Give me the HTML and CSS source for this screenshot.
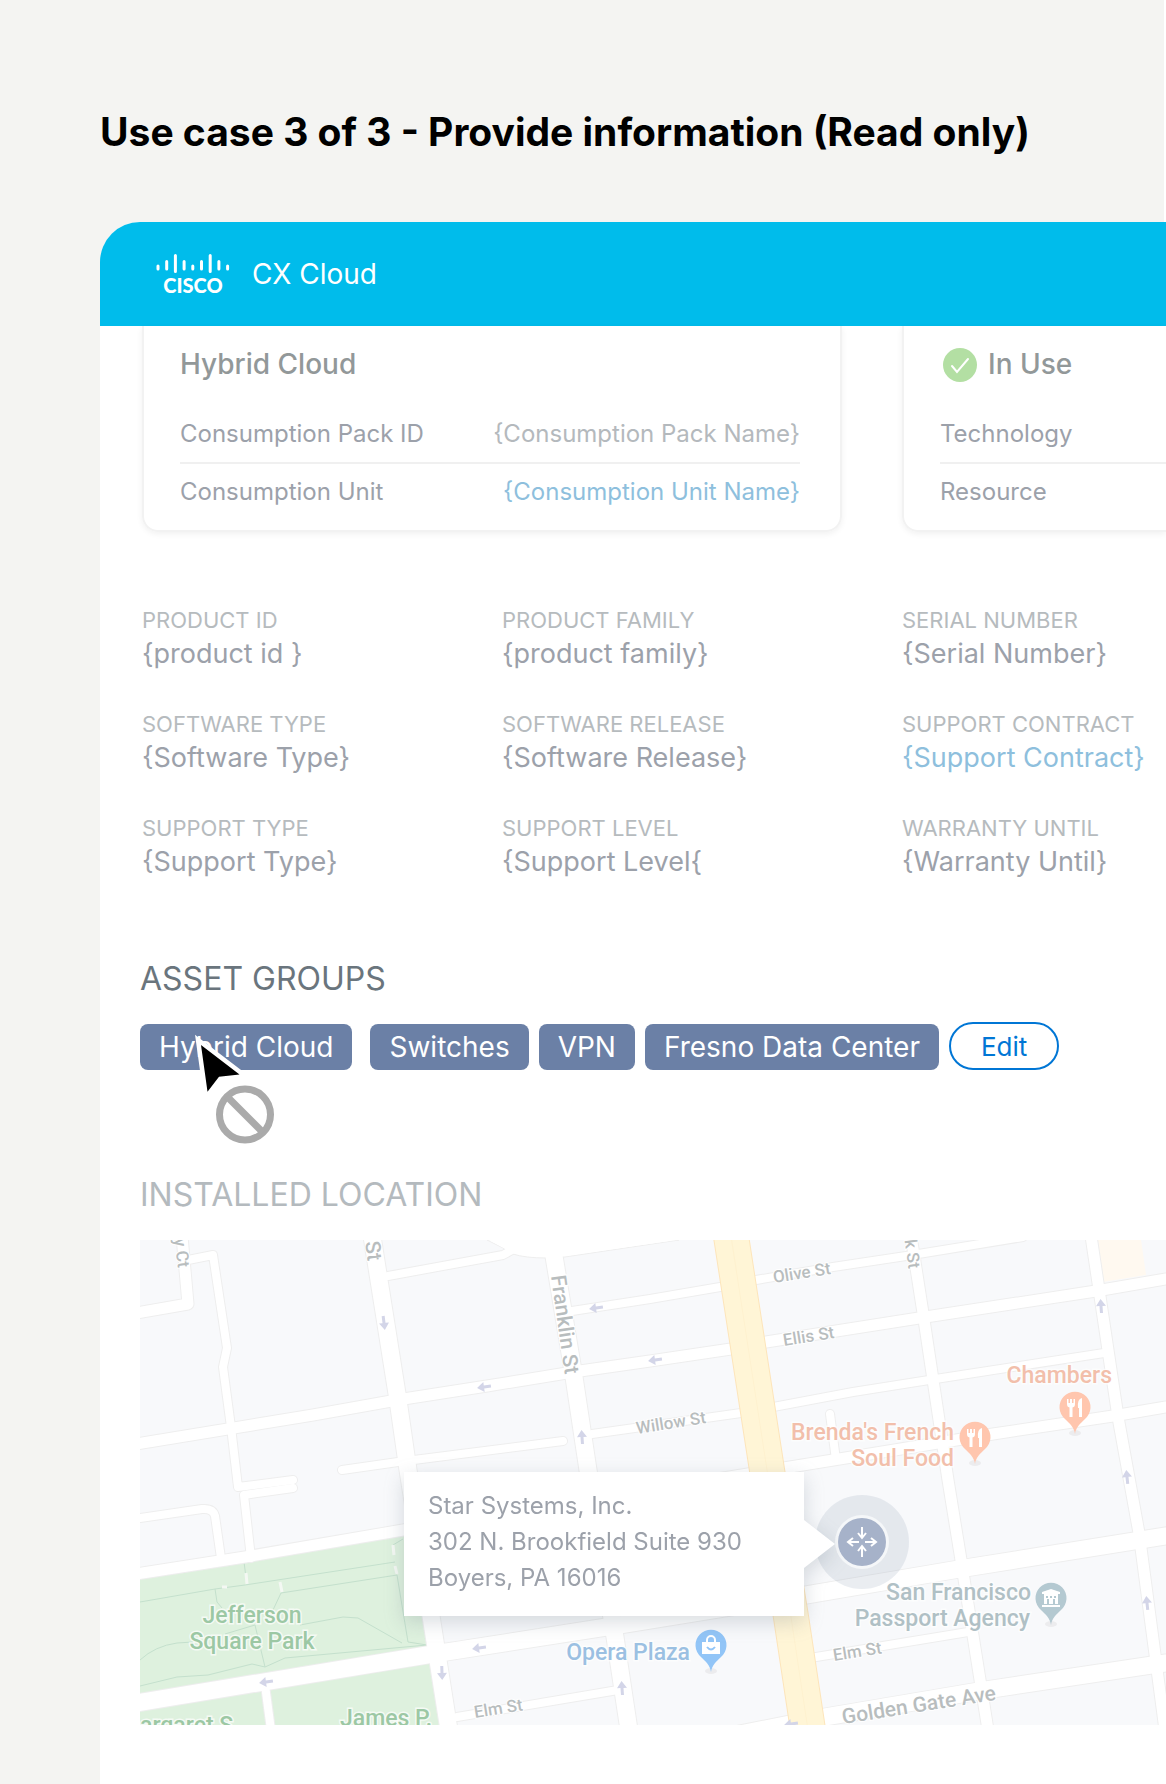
FILE: index.html
```html
<!DOCTYPE html>
<html lang="en">
<head>
<meta charset="utf-8">
<meta name="viewport" content="width=device-width, initial-scale=1">
<title>CX Cloud - Asset details</title>
<link rel="stylesheet" href="styles.css">
</head>
<body>
<div class="stage">
  <h1 class="stage-title">Use case 3 of 3 - Provide information (Read only)</h1>

  <div class="app">
    <header class="app-bar">
      <svg class="logo" viewBox="0 0 78 44" role="img" aria-label="Cisco">
        <g stroke="#fff" stroke-width="3" stroke-linecap="round">
          <path d="M4 14v3M12.700 9.500v7.500M21.400 3.500v16M30.100 9.500v7.500M38.800 14v3M47.500 9.500v7.500M56.200 3.500v16M64.900 9.500v7.500M73.600 14v3"/>
        </g>
        <text class="logo-word" x="39" y="41" text-anchor="middle">CISCO</text>
      </svg>
      <span class="app-name">CX Cloud</span>
    </header>

    <main class="content">
      <div class="cards">
        <section class="card">
          <h2 class="card-title">Hybrid Cloud</h2>
          <dl class="rows">
            <div class="row"><dt>Consumption Pack ID</dt><dd>{Consumption Pack Name}</dd></div>
            <div class="row"><dt>Consumption Unit</dt><dd><a class="link" href="#">{Consumption Unit Name}</a></dd></div>
          </dl>
        </section>
        <section class="card card-cut">
          <h2 class="card-title">
            <svg class="status-icon" viewBox="0 0 40 40" aria-hidden="true">
              <circle cx="20" cy="21" r="17" fill="#b3dfa3"/>
              <path d="M12 22l5 6L28 15" fill="none" stroke="#fff" stroke-width="2" stroke-linecap="round"/>
            </svg>
            In Use
          </h2>
          <dl class="rows">
            <div class="row"><dt>Technology</dt></div>
            <div class="row"><dt>Resource</dt></div>
          </dl>
        </section>
      </div>

      <dl class="fields">
        <div class="field"><dt>PRODUCT ID</dt><dd>{product id }</dd></div>
        <div class="field"><dt>PRODUCT FAMILY</dt><dd>{product family}</dd></div>
        <div class="field"><dt>SERIAL NUMBER</dt><dd>{Serial Number}</dd></div>
        <div class="field"><dt>SOFTWARE TYPE</dt><dd>{Software Type}</dd></div>
        <div class="field"><dt>SOFTWARE RELEASE</dt><dd>{Software Release}</dd></div>
        <div class="field"><dt>SUPPORT CONTRACT</dt><dd><a class="link" href="#">{Support Contract}</a></dd></div>
        <div class="field"><dt>SUPPORT TYPE</dt><dd>{Support Type}</dd></div>
        <div class="field"><dt>SUPPORT LEVEL</dt><dd>{Support Level{</dd></div>
        <div class="field"><dt>WARRANTY UNTIL</dt><dd>{Warranty Until}</dd></div>
      </dl>

      <section class="groups">
        <h2 class="section-title">ASSET GROUPS</h2>
        <div class="chips">
          <span class="chip chip-first">Hybrid Cloud</span>
          <span class="chip">Switches</span>
          <span class="chip">VPN</span>
          <span class="chip">Fresno Data Center</span>
          <button class="edit" type="button">Edit</button>
          <svg class="cursor" viewBox="0 0 90 120" aria-hidden="true">
            <path d="M11 15L49.500 44.500L29 46.700L17.500 61.700Z" fill="none" stroke="#fff" stroke-width="9" stroke-linejoin="miter"/>
            <path d="M11 15L49.500 44.500L29 46.700L17.500 61.700Z" fill="#000"/>
            <g fill="none" stroke="#aaa" stroke-width="7">
              <circle cx="55" cy="84.500" r="25.500"/>
              <path d="M37 66.500L73 102.500"/>
            </g>
          </svg>
        </div>
      </section>

      <section class="location">
        <h2 class="section-title section-title-muted">INSTALLED LOCATION</h2>
        <div class="map">
          <svg class="map-art" viewBox="0 0 1026 485" preserveAspectRatio="xMinYMin slice" role="img" aria-label="Street map">
            <defs>
              <path id="arrow" d="M-7 0L0 -5V-1.500H7V1.500H0V5Z" fill="#d3d5e8"/>
              <path id="pin" d="M0 27C-1 20 -5 17 -10 12A15.500 15.500 0 1 1 10 12C5 17 1 20 0 27Z"/>
              <g id="cutlery" fill="#fff">
                <path d="M-8 -8h1.500v4h1.500v-4h2v4h1.500v-4h1.500v5q0 3 -2.500 3.500V10h-3V.500Q-8 0 -8 -3Z"/>
                <path d="M3 1Q2 -8 7 -9V10H4V1Z"/>
              </g>
              <g id="narrow">
                <path d="M202 230L258 222L423 201"/>
                <path d="M248 36L363 15L372 10"/>
                <path d="M432 71L510 59L586 46M616 40L693 27L766 16L883 -3"/>
                <path d="M452 194L601 173L713 152L789 140L964 113"/>
                <path d="M48 20L73 15L87 108L83 127L91 187L98 247L153 240"/>
                <path d="M153 248L104 255L111 318"/>
                <path d="M0 278L62 269Q73 268 75 276L81 318"/>
                <path d="M317 477L478 450M670 418L828 392"/>
                <path d="M690 174L696 220"/>
                <path d="M125 445L131 490"/>
              </g>
              <g id="medium">
                <path d="M42 -4L48 64L-4 73"/>
                <path d="M-4 204L173 175L257 160L347 146L433 132L510 121L591 109L626 102L779 78L956 51L1026 39L1300 -3"/>
                <path d="M-4 334L105 317L263 290L644 228L853 194L973 176L1026 167L1300 124"/>
                <path d="M771 -4L783 73L808 240L821 320L848 490"/>
                <path d="M951 -4L978 177L999 293L1025 490"/>
              </g>
              <g id="wide">
                <path d="M232 -4L258 160L268 230L309 490"/>
                <path d="M413 10L434 137L448 230L475 397L489 490"/>
                <path d="M-4 463L287 415L473 386L666 355L819 329L1026 296L1300 250"/>
                <path d="M590 496L685 477L839 451L1026 423L1300 380"/>
              </g>
            </defs>

            <rect width="1600" height="485" fill="#f8f9fb"/>
            <path d="M0 333L263 290L270 240L309 485H0Z" fill="#def1de"/>
            <path d="M958 0H1001L1006 35L963 42Z" fill="#fff9f0"/>
            <g fill="none" stroke="#c4e0cd" stroke-width="1">
              <path d="M0 362L75 349L105 345L255 322M104 322L107 345M133 370L141 353L257 335L268 402L287 405L145 418L125 427L112 424L68 435L37 437L0 446"/>
              <path d="M75 349L77 362L82 368M160 385L203 377L218 378L262 403M0 420Q15 406 37 403L53 402M85 394L115 385L125 427M253 305L263 299"/>
            </g>
            <path d="M106 333L107 344M140 342L142 352M253 305L254 315M255 326L257 334M82 347H87" stroke="#f4f8f3" stroke-width="3"/>

            <g fill="none" stroke="#eeeeee" stroke-linecap="round" stroke-linejoin="round">
              <use href="#narrow" stroke-width="10"/>
              <use href="#medium" stroke-width="13"/>
              <use href="#wide" stroke-width="19"/>
            </g>
            <path d="M347 0L363 8L373 14Q385 18 407 18L425 17L539 0Z" fill="#fff" stroke="#eeeeee"/>
            <g fill="none" stroke="#fff" stroke-linecap="round" stroke-linejoin="round">
              <use href="#narrow" stroke-width="8"/>
              <use href="#medium" stroke-width="11"/>
              <use href="#wide" stroke-width="17"/>
            </g>
            <path d="M349 0L373 13Q385 17 407 17L425 16L537 0Z" fill="#fff"/>
            <g fill="none">
              <path d="M591 -4L627 230L651 377L668 490" stroke="#fde5bb" stroke-width="36"/>
              <path d="M591 -4L627 230L651 377L668 490" stroke="#fff5d6" stroke-width="34"/>
              <path d="M591 -4L627 230L651 377L668 490" stroke="#fef1cf" stroke-width="1"/>
            </g>

            <use href="#arrow" transform="translate(244 83) rotate(-97)"/>
            <use href="#arrow" transform="translate(456 68) rotate(-8)"/>
            <use href="#arrow" transform="translate(344 147) rotate(-8)"/>
            <use href="#arrow" transform="translate(442 197) rotate(86)"/>
            <use href="#arrow" transform="translate(515 120) rotate(-8)"/>
            <use href="#arrow" transform="translate(961 66) rotate(86)"/>
            <use href="#arrow" transform="translate(987 237) rotate(84)"/>
            <use href="#arrow" transform="translate(126 442) rotate(-8)"/>
            <use href="#arrow" transform="translate(339 408) rotate(-8)"/>
            <use href="#arrow" transform="translate(302 433) rotate(-92)"/>
            <use href="#arrow" transform="translate(482 448) rotate(86)"/>
            <use href="#arrow" transform="translate(1007 363) rotate(84)"/>
            <use href="#arrow" transform="translate(651 484) rotate(-8)"/>

            <g class="street">
              <text transform="translate(34 -1) rotate(82)">y Ct</text>
              <text transform="translate(764 -4) rotate(82)">lk St</text>
              <text transform="translate(634 43) rotate(-9)">Olive St</text>
              <text transform="translate(644 106) rotate(-9)">Ellis St</text>
              <text transform="translate(497 194) rotate(-9)">Willow St</text>
              <text transform="translate(335 478) rotate(-9)">Elm St</text>
              <text transform="translate(694 421) rotate(-9)">Elm St</text>
            </g>
            <g class="street street-major">
              <text transform="translate(225 2) rotate(82)">St</text>
              <text transform="translate(411 36) rotate(82)">Franklin St</text>
              <text transform="translate(703 484) rotate(-9)">Golden Gate Ave</text>
            </g>

            <g class="poi poi-park">
              <text x="112" y="383" text-anchor="middle">Jefferson</text>
              <text x="112" y="409" text-anchor="middle">Square Park</text>
              <text x="200" y="486">James P.</text>
              <text x="0" y="493">argaret S</text>
            </g>
            <g class="poi poi-food">
              <text x="972" y="143" text-anchor="end">Chambers</text>
              <text x="814" y="200" text-anchor="end">Brenda's French</text>
              <text x="814" y="226" text-anchor="end">Soul Food</text>
            </g>
            <g class="poi poi-office">
              <text x="891" y="360" text-anchor="end">San Francisco</text>
              <text x="890" y="386" text-anchor="end">Passport Agency</text>
            </g>
            <g class="poi poi-shop">
              <text x="550" y="420" text-anchor="end">Opera Plaza</text>
            </g>

            <g fill="#ececee">
              <ellipse cx="935" cy="193" rx="6" ry="3"/>
              <ellipse cx="835" cy="223" rx="6" ry="3"/>
              <ellipse cx="911" cy="384" rx="6" ry="3"/>
              <ellipse cx="571" cy="431" rx="6" ry="3"/>
            </g>
            <g transform="translate(935 167)"><use href="#pin" fill="#ffc6ae"/><use href="#cutlery"/></g>
            <g transform="translate(835 197)"><use href="#pin" fill="#ffc6ae"/><use href="#cutlery"/></g>
            <g transform="translate(911 358)">
              <use href="#pin" fill="#b4c9d1"/>
              <path d="M-9 -4V-6L0 -9L9 -6V-4H7V6H-7V-4ZM-9 7H9V9H-9Z" fill="#fff"/>
              <path d="M-4 -2V0M0 -2V0M4 -2V0M-3 1V6M3 1V6" stroke="#b4c9d1" stroke-width="2"/>
            </g>
            <g transform="translate(571 405)">
              <use href="#pin" fill="#92c5f7"/>
              <path d="M-9 -3H9V9H-9Z" fill="#fff"/>
              <path d="M-4 -3V-5A4 4 0 0 1 4 -5V-3" fill="none" stroke="#fff" stroke-width="2"/>
              <path d="M-4 2Q0 7 4 2" fill="none" stroke="#92c5f7" stroke-width="2"/>
            </g>

            <circle cx="722" cy="302" r="47" fill="#8899b0" fill-opacity=".18"/>
            <circle cx="722" cy="302" r="27" fill="#f5f7f9"/>
          </svg>

          <div class="callout">
            <address class="callout-body">Star Systems, Inc.<br>302 N. Brookfield Suite 930<br>Boyers, PA 16016</address>
            <svg class="callout-tip" viewBox="0 0 31 48" aria-hidden="true"><path d="M0 0L31 24L0 48Z" fill="#fff"/></svg>
          </div>
          <svg class="marker" viewBox="0 0 54 54" aria-hidden="true">
            <circle cx="27" cy="27" r="24" fill="#a6b2c9"/>
            <g fill="none" stroke="#fff" stroke-width="2">
              <path d="M27 12V22M23 18L27 23L31 18M27 42V32M23 36L27 31L31 36M24 27H14M18 23L13 27L18 31M30 27H40M36 23L41 27L36 31"/>
            </g>
          </svg>
        </div>
      </section>
    </main>
  </div>
</div>
</body>
</html>
```
FILE: styles.css
```css
* {
  box-sizing: border-box;
}

html {
  background: #fff;
}

body {
  margin: 0;
  font-family: Inter, "Liberation Sans", sans-serif;
  color: #9ca1aa;
}

h1, h2, dl, dd {
  margin: 0;
}

.stage {
  display: flex;
  flex-direction: column;
  min-height: 100vh;
  padding-left: 100px;
  background: linear-gradient(#f4f4f2, #f4f4f2) no-repeat 0 0 / calc(100% - 2px) 100%;
}

.stage-title {
  padding: 104px 0 62px;
  font-size: 39px;
  line-height: 56px;
  font-weight: 700;
  color: #000;
  white-space: nowrap;
}

.app {
  flex: 1;
  border-top-left-radius: 40px;
  background: #fff;
  overflow: hidden;
}

.app-bar {
  display: flex;
  align-items: center;
  gap: 20px;
  height: 104px;
  padding-left: 54px;
  background: #00bceb;
  color: #fff;
}

.logo {
  width: 78px;
  height: 44px;
}

.logo-word {
  font-family: Lato, sans-serif;
  font-size: 20px;
  font-weight: 900;
  fill: #fff;
}

.app-name {
  font-size: 28px;
  font-weight: 400;
}

.content {
  padding-left: 40px;
}

.cards {
  display: grid;
  grid-template-columns: minmax(0, 700fr) minmax(0, 264fr);
  column-gap: 60px;
  padding-left: 2px;
}

.card {
  padding: 0 40px 10px 36px;
  border: 2px solid #f2f2f2;
  border-top: 0;
  border-radius: 0 0 16px 16px;
  box-shadow: 0 2px 6px rgba(0, 0, 0, 0.06);
}

.card-cut {
  padding-right: 0;
  border-right: 0;
  border-bottom-right-radius: 0;
}

.card-title {
  display: flex;
  align-items: center;
  gap: 8px;
  height: 76px;
  margin-bottom: 4px;
  font-size: 28px;
  font-weight: 500;
  color: #929899;
}

.status-icon {
  width: 40px;
  height: 40px;
}

.row {
  display: flex;
  justify-content: space-between;
  font-size: 24px;
  line-height: 56px;
}

.row + .row {
  border-top: 2px solid #f0f0f0;
}

.row dd {
  color: #b4b9bd;
}

.link {
  color: #8ebfdd;
  text-decoration: none;
}

.fields {
  display: grid;
  grid-template-columns: minmax(0, 360fr) minmax(0, 400fr) minmax(0, 264fr);
  row-gap: 36px;
  padding: 72px 0 0 2px;
}

.field dt {
  font-size: 22px;
  line-height: 32px;
  color: #b6bbbe;
}

.field dd {
  font-size: 27px;
  line-height: 36px;
}

.field dd,
.field dt {
  white-space: nowrap;
}

.groups {
  padding-top: 79px;
}

.section-title {
  font-size: 32px;
  line-height: 40px;
  font-weight: 400;
  color: #6a757d;
}

.section-title-muted {
  color: #b4babe;
}

.chips {
  position: relative;
  display: flex;
  align-items: flex-end;
  gap: 10px;
  padding-top: 23px;
}

.chip {
  padding: 0 19px;
  border-radius: 8px;
  background: #6b80a6;
  font-size: 28px;
  line-height: 46px;
  color: #fff;
  white-space: nowrap;
}

.chip-first {
  margin-right: 8px;
}

.edit {
  height: 48px;
  padding: 0 30px;
  border: 2px solid #0076d5;
  border-radius: 24px;
  background: #fff;
  font-family: inherit;
  font-size: 26px;
  color: #0076d5;
}

.cursor {
  position: absolute;
  left: 50px;
  top: 31px;
  width: 90px;
  height: 120px;
}

.location {
  padding: 105px 0 59px;
}

.map {
  position: relative;
  margin-top: 25px;
  overflow: hidden;
}

.map-art {
  display: block;
  width: 100%;
  height: 485px;
}

.street {
  font-family: Roboto, sans-serif;
  font-size: 17px;
  font-weight: 500;
  fill: #b8bdbe;
  stroke: #fff;
  stroke-width: 2px;
  paint-order: stroke;
}

.street-major {
  font-size: 21px;
}

.poi {
  font-family: Roboto, sans-serif;
  font-size: 23px;
  font-weight: 500;
  stroke: #fff;
  stroke-opacity: 0.7;
  stroke-width: 3px;
  paint-order: stroke;
}

.poi-park { fill: #9cc8a4; }
.poi-food { fill: #f2bfab; }
.poi-office { fill: #b0c0c5; }
.poi-shop { fill: #9bc0e2; }

.callout {
  position: absolute;
  left: 264px;
  top: 232px;
  display: flex;
  align-items: center;
  filter: drop-shadow(0 6px 10px rgba(90, 110, 125, 0.24));
}

.callout-body {
  width: 400px;
  padding: 16px 24px 20px;
  background: #fff;
  font-size: 24px;
  line-height: 36px;
  font-style: normal;
  white-space: nowrap;
}

.callout-tip {
  width: 31px;
  height: 48px;
}

.marker {
  position: absolute;
  left: 695px;
  top: 275px;
  width: 54px;
  height: 54px;
}
```
